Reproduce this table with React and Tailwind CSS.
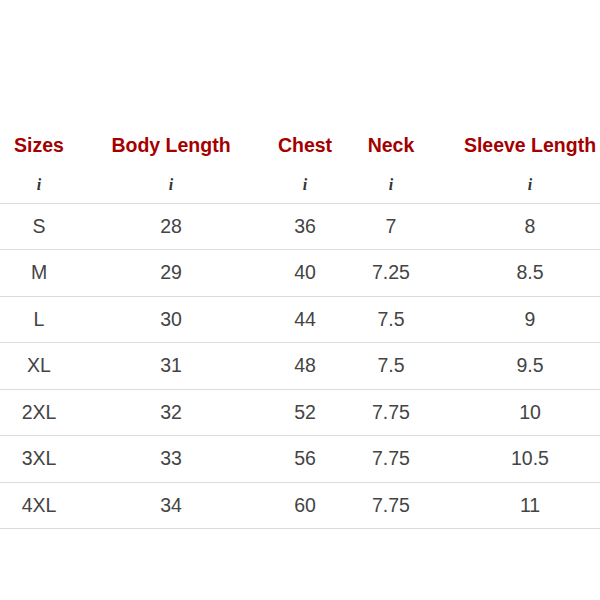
import React from "react";

const rows = [
  ["S", "28", "36", "7", "8"],
  ["M", "29", "40", "7.25", "8.5"],
  ["L", "30", "44", "7.5", "9"],
  ["XL", "31", "48", "7.5", "9.5"],
  ["2XL", "32", "52", "7.75", "10"],
  ["3XL", "33", "56", "7.75", "10.5"],
  ["4XL", "34", "60", "7.75", "11"],
];

const heads = ["Sizes", "Body Length", "Chest", "Neck", "Sleeve Length"];
const widths = ["w-[78px]", "w-[186px]", "w-[82px]", "w-[90px]", "w-[164px]"];
const pads = ["", "", "", "", "pl-[24px]"];

export default function App() {
  return (
    <div className="w-[600px] h-[600px] bg-white pt-[126px] overflow-hidden" style={{ fontFamily: '"Liberation Sans", Arial, sans-serif' }}>
      <table className="w-[600px] border-collapse table-fixed">
        <colgroup>
          {widths.map((w, i) => (
            <col key={i} className={w} />
          ))}
        </colgroup>
        <thead>
          <tr className="h-[40px]">
            {heads.map((h, i) => (
              <th key={h} className={`text-center font-bold text-[19.5px] text-[#a50000] whitespace-nowrap p-0 ${pads[i]}`}>
                {h}
              </th>
            ))}
          </tr>
          <tr className="h-[37px] border-b border-[#dcdcdc]">
            {heads.map((h, i) => (
              <th key={h} className={`text-center p-0 pt-[2px] ${pads[i]}`}>
                <span className="text-[16px] font-bold italic text-[#333]" style={{ fontFamily: '"Liberation Serif", "Times New Roman", serif' }}>
                  i
                </span>
              </th>
            ))}
          </tr>
        </thead>
        <tbody>
          {rows.map((r) => (
            <tr key={r[0]} className="h-[46.5px] border-b border-[#dcdcdc]">
              {r.map((c, i) => (
                <td key={i} className={`text-center text-[19.5px] text-[#444] p-0 ${pads[i]}`}>
                  {c}
                </td>
              ))}
            </tr>
          ))}
        </tbody>
      </table>
    </div>
  );
}
